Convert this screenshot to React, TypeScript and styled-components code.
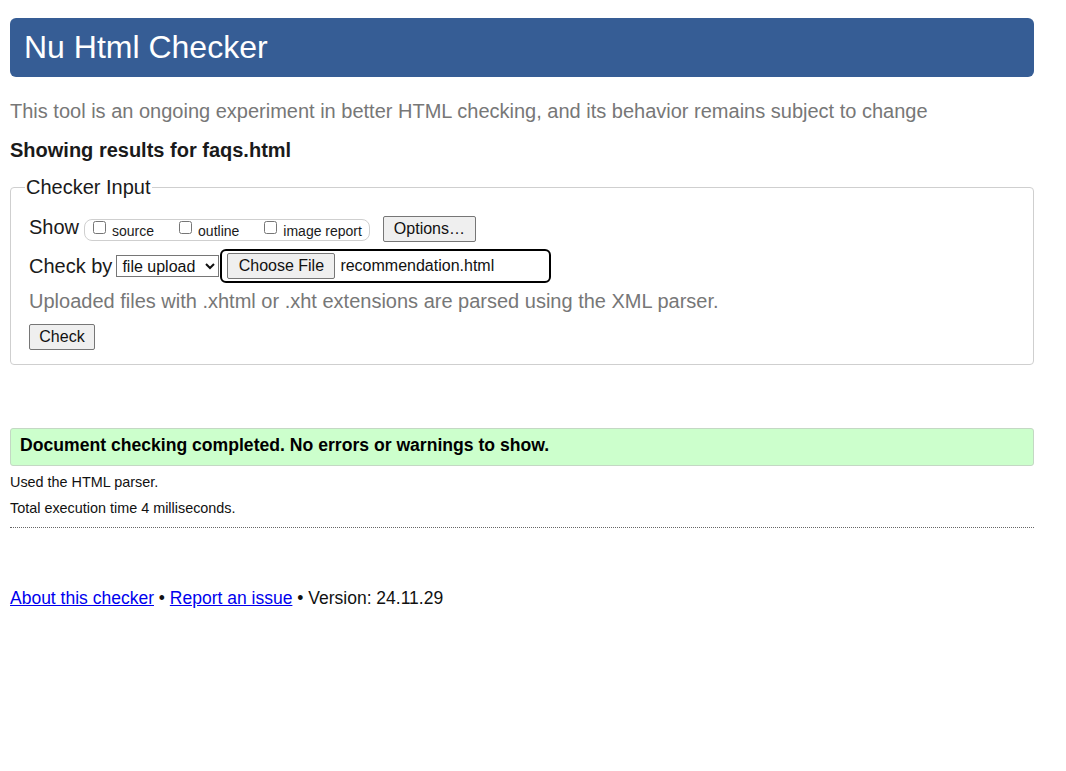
import React from "react";
import styled, { createGlobalStyle } from "styled-components";

const Global = createGlobalStyle`
  html, body { margin: 0; padding: 0; background: #fff; }
  body {
    padding: 0 32px 0 10px;
    font-family: "Liberation Sans", Arial, sans-serif;
    color: #111;
  }
`;

const Page = styled.div`
  display: flex;
  flex-direction: column;
`;

const Title = styled.h1`
  margin: 18px 0 0;
  padding: 11px 14px;
  background: #365d95;
  color: #fff;
  font-size: 32px;
  line-height: 37px;
  font-weight: normal;
  border-radius: 6px;
`;

const Note = styled.p<{ $top?: number }>`
  margin: ${(p) => p.$top ?? 0}px 0 0;
  font-size: 20px;
  line-height: 23px;
  color: #777;
`;

const Heading = styled.h2`
  margin: 16px 0 0;
  font-size: 20px;
  line-height: 23px;
  font-weight: bold;
  color: #1a1a1a;
`;

const Fieldset = styled.fieldset`
  margin: 14px 0 0;
  padding: 17px 18px 14px;
  border: 1px solid #cfcfcf;
  border-radius: 4px;
  min-width: 0;
  display: flex;
  flex-direction: column;
  align-items: flex-start;
`;

const Legend = styled.legend`
  padding: 0 1px;
  margin-left: -4px;
  font-size: 20px;
  line-height: 23px;
  color: #1a1a1a;
`;

const Row = styled.div<{ $top?: number }>`
  display: flex;
  align-items: center;
  margin-top: ${(p) => p.$top ?? 0}px;
`;

const RowLabel = styled.span<{ $gap: number; $lift?: number }>`
  font-size: 20px;
  line-height: 23px;
  color: #1a1a1a;
  margin-right: ${(p) => p.$gap}px;
  margin-bottom: ${(p) => p.$lift ?? 0}px;
`;

const OptionGroup = styled.span`
  display: inline-flex;
  align-items: flex-start;
  height: 20px;
  padding: 0 7px 0 7px;
  border: 1px solid #cfcfcf;
  border-radius: 8px;
  margin-right: 13px;
  margin-top: 2px;
`;

const Option = styled.label<{ $gap: number }>`
  display: inline-flex;
  align-items: flex-start;
  margin-right: ${(p) => p.$gap}px;
  font-size: 14px;
  line-height: 16px;
  color: #1a1a1a;
  &:last-child { margin-right: 0; }
`;

const Box = styled.input`
  width: 13px;
  height: 13px;
  margin: 1px 6px 0 1px;
`;

const OptionText = styled.span`
  margin-top: 3px;
`;

const Button = styled.button<{ $w?: number }>`
  font-family: "Liberation Sans", Arial, sans-serif;
  font-size: 16px;
  line-height: 18px;
  height: 26px;
  padding: 0 9px;
  color: #111;
  background: #efefef;
  border: 1px solid #767676;
  border-radius: 2px;
  ${(p) => (p.$w ? `width: ${p.$w}px;` : "")}
`;

const Select = styled.select`
  font-family: "Liberation Sans", Arial, sans-serif;
  font-size: 16px;
  height: 22px;
  width: 103px;
  padding: 0 0 0 1px;
  color: #111;
  background: #fff;
  border: 1px solid #767676;
  border-radius: 0;
  margin-right: 1px;
`;

const FileWrap = styled.span`
  display: inline-flex;
  align-items: center;
  width: 331px;
  height: 34px;
  box-sizing: border-box;
  padding: 0 5px;
  border: 2px solid #000;
  border-radius: 6px;
`;

const FileName = styled.span`
  margin-left: 5px;
  font-size: 16px;
  color: #111;
`;

const Success = styled.div`
  margin-top: 63px;
  padding: 6px 9px 10px;
  background: #ccffcc;
  border: 1px solid #c4d8c4;
  border-radius: 3px;
  font-size: 17.6px;
  line-height: 20px;
  font-weight: bold;
  color: #000;
`;

const Detail = styled.p<{ $top: number }>`
  margin: ${(p) => p.$top}px 0 0;
  font-size: 14.4px;
  line-height: 16px;
  color: #111;
`;

const Divider = styled.div`
  margin-top: 11px;
  border-top: 1px dotted #666;
`;

const Footer = styled.p`
  margin: 60px 0 0;
  font-size: 17.5px;
  line-height: 20px;
  color: #111;
`;

const Link = styled.a`
  color: #0000ee;
  text-decoration: underline;
`;

export default function App() {
  return (
    <Page>
      <Global />
      <Title>Nu Html Checker</Title>
      <Note $top={23}>
        This tool is an ongoing experiment in better HTML checking, and its behavior remains subject to change
      </Note>
      <Heading>Showing results for faqs.html</Heading>
      <Fieldset>
        <Legend>Checker Input</Legend>
        <Row>
          <RowLabel $gap={5} $lift={3}>Show</RowLabel>
          <OptionGroup>
            <Option $gap={24}>
              <Box type="checkbox" />
              <OptionText>source</OptionText>
            </Option>
            <Option $gap={24}>
              <Box type="checkbox" />
              <OptionText>outline</OptionText>
            </Option>
            <Option $gap={0}>
              <Box type="checkbox" />
              <OptionText>image report</OptionText>
            </Option>
          </OptionGroup>
          <Button $w={93}>Options…</Button>
        </Row>
        <Row $top={7}>
          <RowLabel $gap={4}>Check by</RowLabel>
          <Select defaultValue="upload">
            <option value="address">address</option>
            <option value="upload">file upload</option>
            <option value="input">text input</option>
          </Select>
          <FileWrap>
            <Button $w={108}>Choose File</Button>
            <FileName>recommendation.html</FileName>
          </FileWrap>
        </Row>
        <Note $top={7}>Uploaded files with .xhtml or .xht extensions are parsed using the XML parser.</Note>
        <Row $top={11}>
          <Button $w={66}>Check</Button>
        </Row>
      </Fieldset>
      <Success>Document checking completed. No errors or warnings to show.</Success>
      <Detail $top={8}>Used the HTML parser.</Detail>
      <Detail $top={10}>Total execution time 4 milliseconds.</Detail>
      <Divider />
      <Footer>
        <Link href="#about">About this checker</Link> • <Link href="#report">Report an issue</Link> • Version: 24.11.29
      </Footer>
    </Page>
  );
}
